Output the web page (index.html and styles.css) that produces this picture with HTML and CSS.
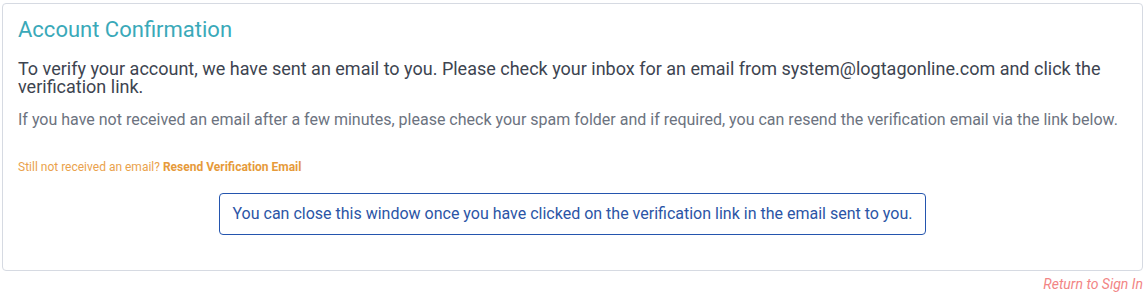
FILE: index.html
```html
<!DOCTYPE html>
<html>
<head>
<meta charset="utf-8">
<link rel="stylesheet" href="styles.css">
</head>
<body>
<div class="page">
  <div class="card">
    <h2 class="title">Account Confirmation</h2>
    <p class="lead">To verify your account, we have sent an email to you. Please check your inbox for an email from system@logtagonline.com and click the verification link.</p>
    <p class="muted">If you have not received an email after a few minutes, please check your spam folder and if required, you can resend the verification email via the link below.</p>
    <p class="resend">Still not received an email? <a class="resend-link" href="#">Resend Verification Email</a></p>
    <div class="notice-row">
      <div class="notice">You can close this window once you have clicked on the verification link in the email sent to you.</div>
    </div>
  </div>
  <div class="footer">
    <a class="signin" href="#">Return to Sign In</a>
  </div>
</div>
</body>
</html>
```
FILE: styles.css
```css
html, body {
  margin: 0;
  padding: 0;
  background: #ffffff;
}
body {
  font-family: Roboto, "Liberation Sans", sans-serif;
}
.page {
  padding: 3px 3px 0 2px;
}
.card {
  border: 1px solid #d6dae2;
  border-radius: 4px;
  padding: 13px 15px 35px 15px;
}
.title {
  margin: 0;
  font-size: 22px;
  font-weight: 400;
  line-height: 26px;
  color: #3aa9b9;
}
.lead {
  margin: 17px 0 0 0;
  font-size: 18px;
  line-height: 18px;
  color: #3d4450;
}
.muted {
  margin: 15px 0 0 0;
  font-size: 16px;
  line-height: 18px;
  color: #6c7380;
}
.resend {
  margin: 31px 0 0 0;
  font-size: 12px;
  line-height: 14px;
  color: #eaa24c;
}
.resend-link {
  color: #e69a3a;
  font-weight: 700;
  text-decoration: none;
}
.notice-row {
  display: flex;
  justify-content: center;
  margin-top: 19px;
}
.notice {
  border: 1px solid #2455ae;
  border-radius: 4px;
  padding: 11px 13px 11px 13px;
  font-size: 16px;
  line-height: 18px;
  color: #2b55a6;
}
.footer {
  display: flex;
  justify-content: flex-end;
  padding-top: 5px;
}
.signin {
  font-size: 14px;
  font-style: italic;
  color: #f28585;
  text-decoration: none;
  line-height: 16px;
}
```
